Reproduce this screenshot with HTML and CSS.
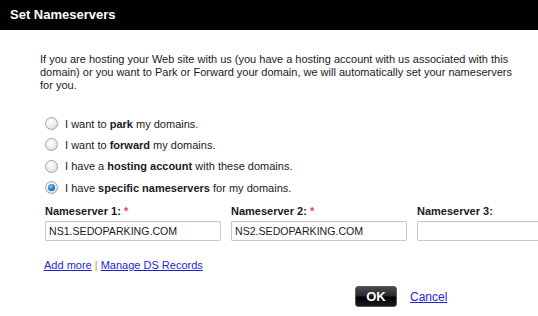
FILE: index.html
```html
<!DOCTYPE html>
<html lang="en">
<head>
    <meta charset="UTF-8">
    <title>Set Nameservers</title>
    <link rel="stylesheet" href="styles.css">
</head>
<body>
    <div class="titlebar">Set Nameservers</div>
    <div class="content">
        <p class="intro">If you are hosting your Web site with us (you have a hosting account with us associated with this domain) or you want to Park or Forward your domain, we will automatically set your nameservers for you.</p>
        <div class="options">
            <label class="option"><input type="radio" name="ns_mode"> I want to <b>park</b> my domains.</label>
            <label class="option"><input type="radio" name="ns_mode"> I want to <b>forward</b> my domains.</label>
            <label class="option"><input type="radio" name="ns_mode"> I have a <b>hosting account</b> with these domains.</label>
            <label class="option"><input type="radio" name="ns_mode" checked> I have <b>specific nameservers</b> for my domains.</label>
        </div>
        <div class="ns-row">
            <div class="ns-field">
                <label for="ns1">Nameserver 1: <span class="req">*</span></label>
                <input type="text" id="ns1" value="NS1.SEDOPARKING.COM">
            </div>
            <div class="ns-field">
                <label for="ns2">Nameserver 2: <span class="req">*</span></label>
                <input type="text" id="ns2" value="NS2.SEDOPARKING.COM">
            </div>
            <div class="ns-field">
                <label for="ns3">Nameserver 3:</label>
                <input type="text" id="ns3">
            </div>
        </div>
        <div class="links">
            <a href="#">Add more</a> <span class="sep">|</span> <a href="#">Manage DS Records</a>
        </div>
        <div class="actions">
            <button class="ok-btn">OK</button>
            <a href="#" class="cancel">Cancel</a>
        </div>
    </div>
</body>
</html>
```

FILE: styles.css
```css
body {
    margin: 0;
    font-family: "Liberation Sans", Arial, sans-serif;
    font-size: 11px;
    color: #1a1a1a;
    background-color: #fff;
    overflow: hidden;
}
.titlebar {
    background-color: #000;
    color: #fff;
    height: 30px;
    line-height: 30px;
    padding-left: 10px;
    font-size: 13px;
    font-weight: bold;
}
.content {
    padding-left: 40px;
}
.intro {
    width: 485px;
    margin: 23px 0 0 0;
    line-height: 13px;
}
.options {
    margin-top: 21px;
    padding-left: 5px;
}
.option {
    display: flex;
    align-items: center;
    height: 21.3px;
    white-space: pre;
}
.option input {
    appearance: none;
    -webkit-appearance: none;
    width: 13px;
    height: 13px;
    margin: 0 4px 0 0;
    border: 1px solid #a4a4a4;
    border-radius: 50%;
    background: radial-gradient(circle at 40% 35%, #fff 0%, #f0f0f0 45%, #cfcfcf 100%);
    box-sizing: border-box;
    position: relative;
}
.option input:checked::after {
    content: '';
    position: absolute;
    left: 2px;
    top: 2px;
    width: 7px;
    height: 7px;
    border-radius: 50%;
    background: radial-gradient(circle at 40% 35%, #8fd3ff 0%, #1d7fd0 50%, #0b3f7a 100%);
}
.ns-row {
    display: flex;
    gap: 10px;
    margin-top: 7px;
    padding-left: 5px;
    overflow: hidden;
}
.ns-field {
    flex-shrink: 0;
}
.ns-field label {
    display: block;
    font-weight: bold;
    height: 16px;
    line-height: 13px;
}
.req {
    color: #e24a4a;
}
.ns-field input {
    width: 176px;
    height: 20px;
    box-sizing: border-box;
    border: 1px solid #c9c9c9;
    border-radius: 1px;
    padding: 0 3px;
    font-family: "Liberation Sans", Arial, sans-serif;
    font-size: 10.6px;
    color: #1a1a1a;
    box-shadow: inset 0 1px 1px rgba(0, 0, 0, 0.05);
}
.links {
    margin-top: 18px;
    padding-left: 4px;
}
.links a, .cancel {
    color: #1f1fd8;
    text-decoration: underline;
}
.sep {
    color: #d18a3c;
}
.actions {
    display: flex;
    align-items: center;
    margin-top: 15px;
    padding-left: 315px;
}
.ok-btn {
    width: 42px;
    height: 21px;
    padding: 0;
    border: 1px solid #5a5a5a;
    border-radius: 3px;
    background: linear-gradient(#4a4a4a 0%, #2a2a2a 45%, #000 55%, #1b1b1b 100%);
    color: #fff;
    font-family: "Liberation Sans", Arial, sans-serif;
    font-size: 13px;
    font-weight: bold;
    cursor: pointer;
}
.cancel {
    margin-left: 13px;
    font-size: 12px;
}
```
